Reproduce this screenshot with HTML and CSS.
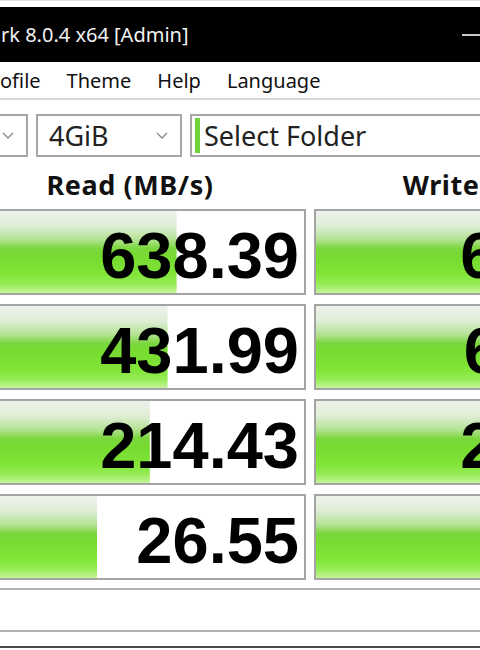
FILE: index.html
```html
<!DOCTYPE html>
<html lang="en">
<head>
  <meta charset="UTF-8" />
  <meta name="viewport" content="width=device-width, initial-scale=1.0"/>
  <title>CrystalDiskMark 8.0.4 x64 [Admin]</title>
  <link rel="stylesheet" href="styles.css">
</head>
<body>

<div class="window">
  <!-- Title bar -->
  <div class="titlebar">
    <span class="title">rk 8.0.4 x64 [Admin]</span>
    <span class="min-btn"></span>
  </div>

  <!-- Menu -->
  <div class="menubar">
    <span>ofile</span>
    <span>Theme</span>
    <span>Help</span>
    <span>Language</span>
  </div>

  <div class="content">
    <!-- Test settings -->
    <div class="toolbar">
      <div class="select count">
        <span class="select-text"></span>
        <svg class="chevron" width="12" height="7" viewBox="0 0 12 7"><polyline points="1,1 6,6 11,1" fill="none" stroke="#8a8a8a" stroke-width="1.3"/></svg>
      </div>
      <div class="select size">
        <span class="select-text">4GiB</span>
        <svg class="chevron" width="12" height="7" viewBox="0 0 12 7"><polyline points="1,1 6,6 11,1" fill="none" stroke="#8a8a8a" stroke-width="1.3"/></svg>
      </div>
      <div class="select drive">
        <span class="mark"></span>
        <span class="select-text">Select Folder</span>
      </div>
    </div>

    <!-- Results -->
    <div class="results">
      <div class="col-head">Read (MB/s)</div>
      <div class="col-head">Write (MB/s)</div>

      <div class="cell" style="--fill: 63.4%"><span class="value">638.39</span></div>
      <div class="cell" style="--fill: 100%"><span class="value">625.47</span></div>

      <div class="cell" style="--fill: 60.8%"><span class="value">431.99</span></div>
      <div class="cell" style="--fill: 100%"><span class="value">611.22</span></div>

      <div class="cell" style="--fill: 55.7%"><span class="value">214.43</span></div>
      <div class="cell" style="--fill: 100%"><span class="value">258.10</span></div>

      <div class="cell" style="--fill: 40.6%"><span class="value">26.55</span></div>
      <div class="cell" style="--fill: 100%"><span class="value">40.12</span></div>
    </div>

    <div class="comment"></div>
  </div>
</div>

</body>
</html>
```

FILE: styles.css
```css
html, body {
  overflow: hidden;
}

body {
  margin: 0;
  background: #fff;
  font-family: "Noto Sans", Arial, sans-serif;
  color: #111;
}

.window {
  width: 480px;
  padding-top: 6px;
  padding-bottom: 14px;
  border-bottom: 2px solid #4a4a4a;
  border-top: 1px solid #e2e2e2;
}

.titlebar {
  height: 55px;
  background: #000;
  display: flex;
  align-items: center;
  color: #f2f2f2;
  font-size: 20px;
}

.title {
  padding-left: 1px;
}

.min-btn {
  margin-left: auto;
  width: 18px;
  height: 2px;
  background: #c8c8c8;
}

.menubar {
  height: 36px;
  display: flex;
  align-items: center;
  gap: 26px;
  font-size: 20px;
  border-bottom: 2px solid #d6d6d6;
}

.content {
  margin-left: -46px;
  width: 712px;
}

.toolbar {
  display: flex;
  gap: 8px;
  padding-top: 14px;
}

.select {
  height: 43px;
  box-sizing: border-box;
  border: 2px solid #a6a6a6;
  display: flex;
  align-items: center;
  font-size: 27px;
  color: #222;
}

.select .chevron {
  margin-left: auto;
  margin-right: 12px;
}

.count {
  width: 74px;
}

.size {
  width: 146px;
  padding-left: 11px;
}

.drive {
  flex: 1;
  padding-left: 3px;
  gap: 4px;
}

.mark {
  width: 5px;
  height: 35px;
  background: #6fd33a;
}

.results {
  display: grid;
  grid-template-columns: 352px 352px;
  grid-template-rows: 43px repeat(4, 86px);
  column-gap: 8px;
  row-gap: 9px;
}

.col-head {
  display: flex;
  align-items: center;
  justify-content: center;
  padding-top: 12px;
  font-size: 27px;
  letter-spacing: 0.6px;
  font-weight: bold;
  color: #111;
}

.cell {
  box-sizing: border-box;
  border: 2px solid #a4a4a4;
  display: flex;
  align-items: center;
  justify-content: flex-end;
  padding: 6px 5px 0 0;
  background:
    linear-gradient(to bottom,
      #eef1ec 0%,
      #dfeed6 18%,
      #b6e398 34%,
      #7ad63c 46%,
      #76dc30 56%,
      #82e538 78%,
      #98ec58 90%,
      #c4f49c 100%) no-repeat 0 0 / var(--fill) 100%,
    #fff;
}

.value {
  font-family: "Liberation Sans", Arial, sans-serif;
  font-weight: bold;
  font-size: 65px;
  line-height: 1;
  color: #000;
}

.comment {
  margin-top: 8px;
  height: 44px;
  box-sizing: border-box;
  border-top: 2px solid #b0b0b0;
  border-bottom: 2px solid #b0b0b0;
}
```
